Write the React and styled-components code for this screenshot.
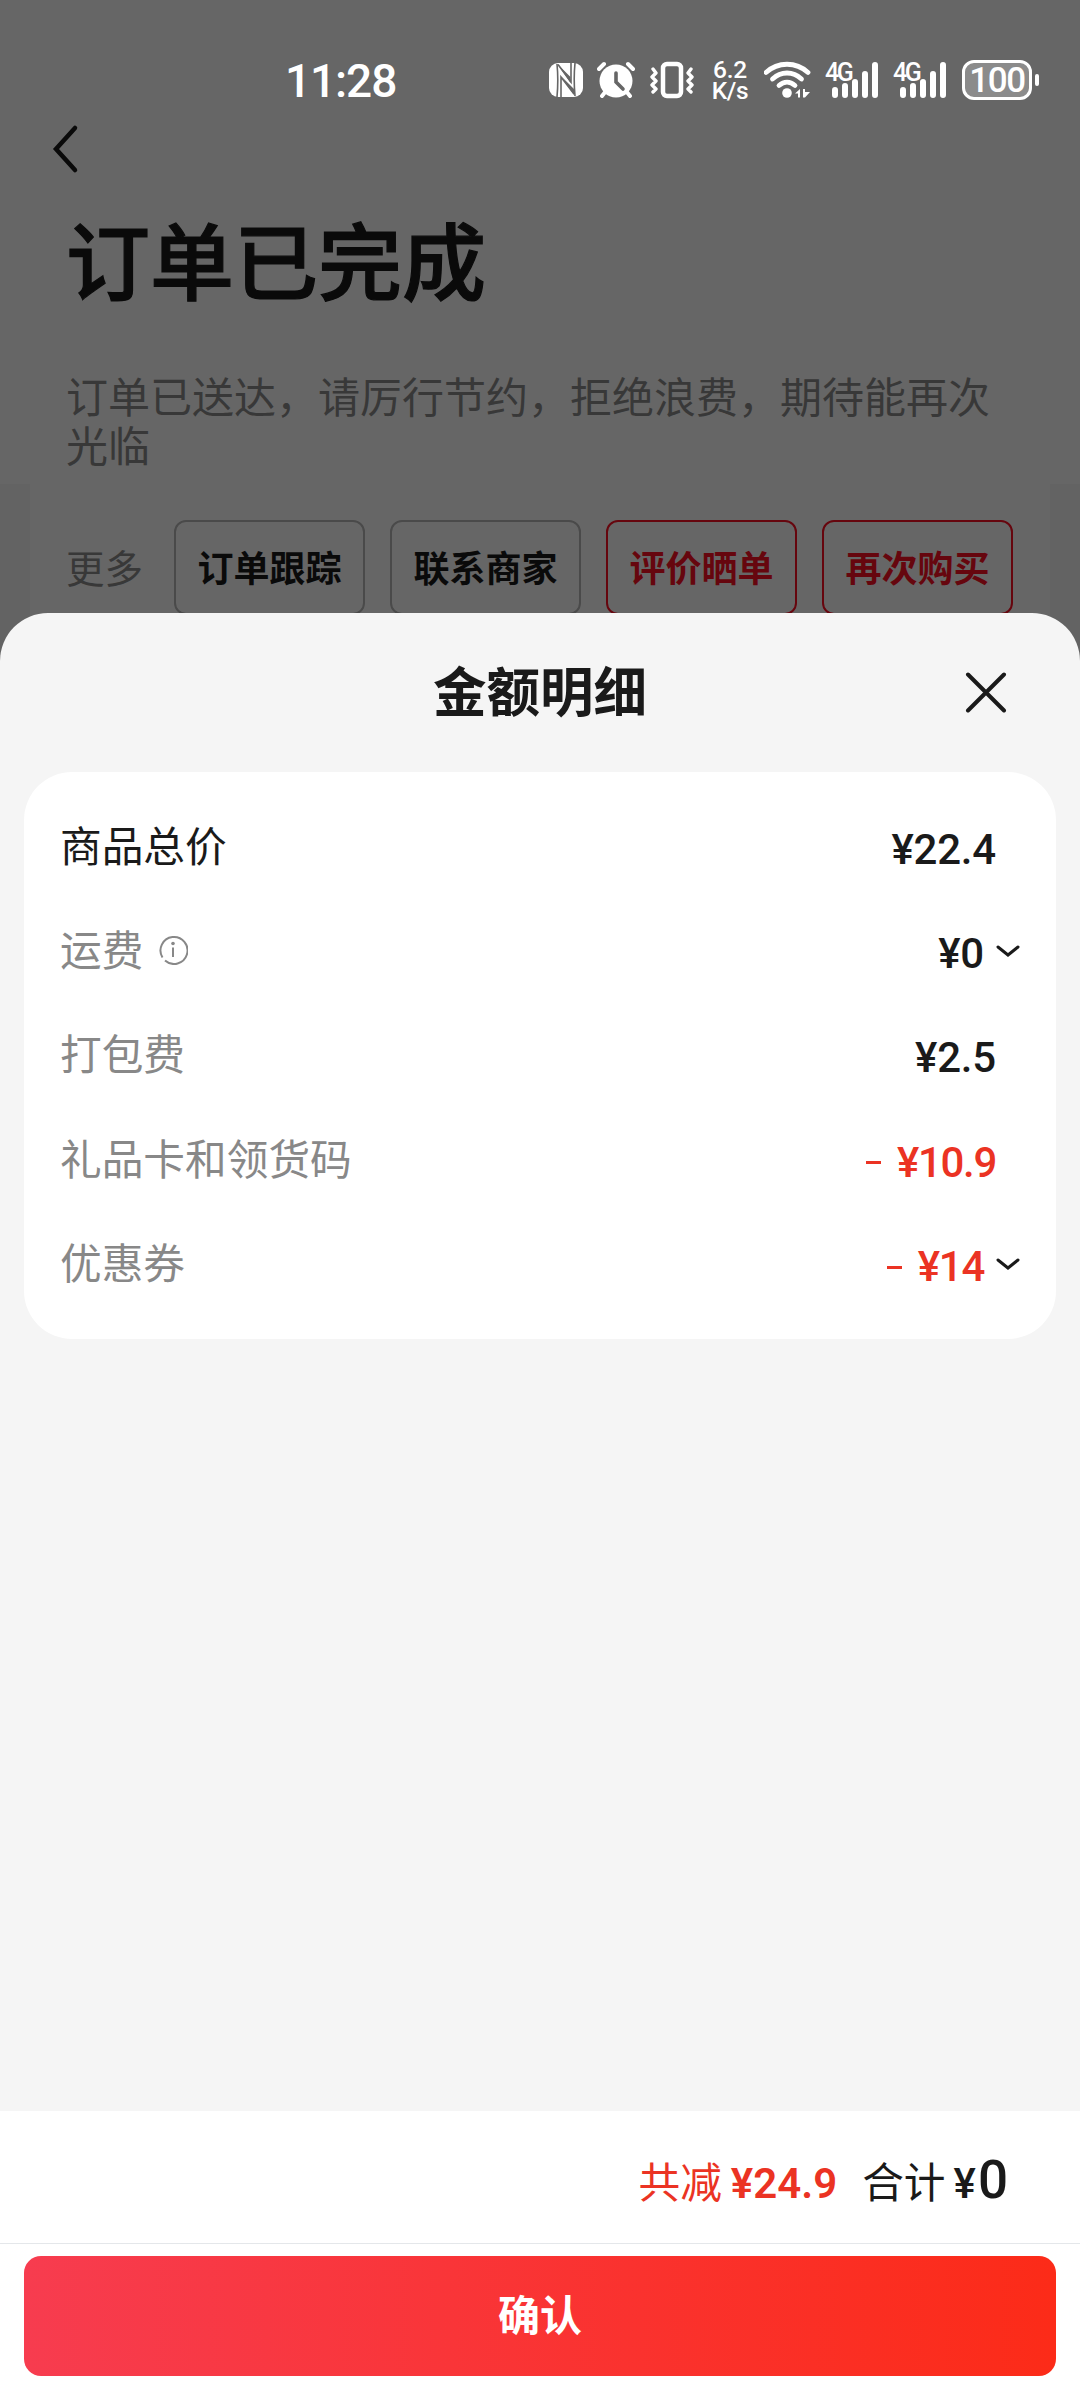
import React from "react";
import styled, { createGlobalStyle } from "styled-components";

const GlobalStyle = createGlobalStyle`
  * {
    box-sizing: border-box;
  }
  body {
    margin: 0;
    font-family: "Noto Sans CJK SC", sans-serif;
    color: #1a1a1a;
  }
`;

const Screen = styled.div`
  position: relative;
  width: 1080px;
  height: 2400px;
  overflow: hidden;
  background: #f7f7f7;
`;

// ---- status bar ----
const StatusBar = styled.div`
  position: absolute;
  top: 0;
  left: 0;
  right: 0;
  z-index: 2;
  height: 160px;
  padding: 0 41px 0 285px;
  display: flex;
  align-items: center;
  color: #fff;
  font-family: Roboto, sans-serif;
`;
const Time = styled.div`
  flex: 1;
  padding-top: 1px;
  font-size: 46px;
  font-weight: 500;
  line-height: 54px;
  letter-spacing: -1.1px;
`;
const StatusIcon = styled.svg`
  display: block;
  flex: none;
  width: ${(props) => props.$w}px;
  height: 40px;
  margin-left: ${(props) => props.$gap}px;
`;
const Speed = styled.div`
  width: 38px;
  margin-left: 17px;
  font-size: 24.5px;
  font-weight: 500;
  line-height: 21.5px;
  letter-spacing: -0.3px;
  text-align: center;
`;
const Signal = styled.div`
  display: flex;
  align-items: flex-start;
  height: 40px;
  margin-left: ${(props) => props.$gap}px;
`;
const Network = styled.span`
  width: 7px;
  margin-top: 1px;
  font-size: 25px;
  font-weight: 500;
  line-height: 24px;
  letter-spacing: -2.5px;
  white-space: nowrap;
`;
const Battery = styled.div`
  width: 70px;
  height: 40px;
  margin-left: 16px;
  border: 3px solid #fff;
  border-radius: 12px;
  background: #8b8b8b;
  font-size: 35px;
  font-weight: 500;
  line-height: 35px;
  letter-spacing: -1.4px;
  text-align: center;
`;
const BatteryTip = styled.div`
  width: 4px;
  height: 12px;
  margin-left: 3px;
  border-radius: 2px;
  background: #fff;
`;

// ---- order page under the mask ----
const Header = styled.div`
  height: 484px;
  padding: 122px 66px 0;
  background: #fff;
`;
const Back = styled.svg`
  display: block;
  width: 28px;
  height: 54px;
  margin-left: -14px;
`;
const Title = styled.h1`
  margin: 32px 0 0;
  font-size: 84px;
  font-weight: 500;
  line-height: 100px;
  -webkit-text-stroke: 1.2px #1a1a1a;
`;
const Desc = styled.p`
  margin: 62px 0 0;
  font-size: 42px;
  line-height: 49px;
  color: #8c8c8c;
`;
const Actions = styled.div`
  display: flex;
  align-items: center;
  gap: 25px;
  height: 200px;
  margin: 0 30px;
  padding: 36px 36px 70px;
  background: #fff;
`;
const More = styled.span`
  width: 83px;
  padding-bottom: 2px;
  font-size: 38.5px;
  color: #8c8c8c;
`;
const Action = styled.button`
  width: 191px;
  height: 95px;
  padding: 0 0 2px;
  border: 2px solid ${(props) => (props.$primary ? "#ff0f23" : "#b8b8b8")};
  border-radius: 12px;
  background: transparent;
  font-family: inherit;
  font-size: 36px;
  font-weight: 700;
  color: ${(props) => (props.$primary ? "#ff0f23" : "#1a1a1a")};
`;
const Mask = styled.div`
  position: absolute;
  inset: 0;
  background: rgba(0, 0, 0, 0.6);
`;

// ---- bottom sheet ----
const Sheet = styled.div`
  position: absolute;
  top: 613px;
  left: 0;
  right: 0;
  bottom: 0;
  display: flex;
  flex-direction: column;
  border-radius: 48px 48px 0 0;
  background: #f5f5f5;
  overflow: hidden;
`;
const SheetHeader = styled.div`
  display: grid;
  grid-template-columns: 1fr auto 1fr;
  align-items: center;
  height: 159px;
  padding: 0 73px;
`;
const SheetTitle = styled.h2`
  grid-column: 2;
  margin: 0 0 8px;
  font-size: 53.5px;
  font-weight: 700;
  line-height: 64px;
`;
const Close = styled.svg`
  justify-self: end;
  width: 42px;
  height: 42px;
`;
const Card = styled.div`
  height: 567px;
  margin: 0 24px;
  padding: 21px 36px 0 36px;
  border-radius: 48px;
  background: #fff;
`;
const Row = styled.div`
  display: flex;
  align-items: center;
  height: 104.4px;
`;
const Label = styled.div`
  flex: 1;
  display: flex;
  align-items: center;
  margin-bottom: 3px;
  font-size: 41.7px;
  line-height: 60px;
  color: ${(props) => (props.$strong ? "#1a1a1a" : "#888")};
`;
const Info = styled.svg`
  width: 30px;
  height: 30px;
  margin: 4px 0 0 15px;
`;
const Amount = styled.div`
  display: flex;
  align-items: center;
  margin: 9px ${(props) => (props.$arrow ? 0 : 24)}px 0 0;
  font-family: Roboto, sans-serif;
  font-size: 42px;
  font-weight: 500;
  line-height: 50px;
  letter-spacing: ${(props) => (props.$minus ? -1.3 : -0.2)}px;
  color: ${(props) => (props.$minus ? "#eb3323" : "#1a1a1a")};
`;
const Minus = styled.span`
  width: 15px;
  height: 3px;
  margin: 0 16px 0 0;
  background: currentColor;
`;
const Arrow = styled.svg`
  width: 24px;
  height: 16px;
  margin: -6px 0 0 12px;
`;
const Summary = styled.div`
  display: flex;
  align-items: baseline;
  height: 133px;
  margin-top: auto;
  padding: 39px 72px 0 0;
  justify-content: flex-end;
  border-bottom: 1px solid #e4e7ea;
  background: #fff;
  font-size: 41.7px;
  line-height: 60px;
`;
const Cut = styled.span`
  margin-right: 25px;
  color: #eb3323;
`;
const Price = styled.span`
  margin-left: ${(props) => props.$gap}px;
  font-family: Roboto, sans-serif;
  font-weight: ${(props) => props.$weight || 500};
  font-size: ${(props) => props.$size || 42}px;
`;
const Footer = styled.div`
  height: 156px;
  padding: 12px 24px 24px;
  background: #fff;
`;
const Confirm = styled.button`
  display: block;
  width: 100%;
  height: 120px;
  padding: 0 0 8px;
  border: none;
  border-radius: 17px;
  background: linear-gradient(90deg, #f73c4f, #fc2b18);
  font-family: inherit;
  font-size: 42px;
  font-weight: 700;
  color: #fff;
`;

const rows = [
  { label: "商品总价", value: "¥22.4", strong: true },
  { label: "运费", value: "¥0", info: true, arrow: true },
  { label: "打包费", value: "¥2.5" },
  { label: "礼品卡和领货码", value: "¥10.9", minus: true },
  { label: "优惠券", value: "¥14", minus: true, arrow: true },
];

const SignalBars = ({ gap }) => (
  <Signal $gap={gap}>
    <Network>4G</Network>
    <svg width="46" height="40" viewBox="0 0 46 40" stroke="#fff" strokeWidth="6" strokeLinecap="round">
      <path d="M3 30v5M13 26v9M23 22v13M33 14v21M43 5v30" />
    </svg>
  </Signal>
);

const Status = () => (
  <StatusBar>
    <Time>11:28</Time>
    <StatusIcon $w={34} $gap={0} viewBox="0 0 34 40">
      <rect x="0" y="3" width="34" height="34" rx="9" fill="#fff" />
      <g fill="none" stroke="#666" strokeWidth="1.6">
        <path d="M8 4c1 10 1 22 0 33M26 3c-1 10-1 22 0 33" />
        <path d="M22 3v19L9 4.500M12 37V17l13 17" />
      </g>
      <path d="M8.500 4l13 13v6zM12 16l13 13v6z" fill="#666" />
    </StatusIcon>
    <StatusIcon $w={38} $gap={14} viewBox="0 0 38 40" fill="none" stroke="#fff" strokeLinecap="round">
      <circle cx="19" cy="21" r="16.500" fill="#fff" stroke="none" />
      <path d="M2 9l5-5M36 9l-5-5M5 36l4-5M33 36l-4-5" strokeWidth="4" />
      <path d="M19 13v9l7 7" stroke="#666" strokeWidth="3.600" />
    </StatusIcon>
    <StatusIcon $w={44} $gap={15} viewBox="0 0 44 40" fill="none" stroke="#fff" strokeLinejoin="round" strokeLinecap="round">
      <rect x="13" y="4" width="18" height="32" rx="4" strokeWidth="4.500" />
      <path d="M3 9l3 4-4 4 4 4-4 4 4 4-3 3M41 9l-3 4 4 4-4 4 4 4-4 4 3 3" strokeWidth="3.400" />
    </StatusIcon>
    <Speed>6.2 K/s</Speed>
    <StatusIcon $w={48} $gap={15} viewBox="0 0 48 40" fill="none" stroke="#fff" strokeLinecap="round">
      <path d="M2 12.500C14 1.500 32 1.500 44 12.500" strokeWidth="4.800" />
      <path d="M8.500 19C17 11 29 11 37.500 19M15 25.500c5-4.500 11-4.500 16 0" strokeWidth="4.800" />
      <circle cx="23" cy="33" r="4.800" fill="#fff" stroke="none" />
      <path d="M31 33.500l5-4.500v8.500h-2v-4zM39 29h2v3h5l-5 5.500h-2z" fill="#fff" stroke="none" />
    </StatusIcon>
    <SignalBars gap={13} />
    <SignalBars gap={15} />
    <Battery>100</Battery>
    <BatteryTip />
  </StatusBar>
);

const OrderPage = () => (
  <>
    <Header>
      <Back viewBox="0 0 28 54" fill="none" stroke="#1a1a1a" strokeWidth="4.500" strokeLinecap="round">
        <path d="M23 6L4 27l19 21" />
      </Back>
      <Title>订单已完成</Title>
      <Desc>订单已送达，请厉行节约，拒绝浪费，期待能再次光临</Desc>
    </Header>
    <Actions>
      <More>更多</More>
      <Action>订单跟踪</Action>
      <Action>联系商家</Action>
      <Action $primary>评价晒单</Action>
      <Action $primary>再次购买</Action>
    </Actions>
  </>
);

const App = () => {
  return (
    <Screen>
      <GlobalStyle />
      <Status />
      <OrderPage />
      <Mask />
      <Sheet>
        <SheetHeader>
          <SheetTitle>金额明细</SheetTitle>
          <Close viewBox="0 0 42 42" stroke="#1a1a1a" strokeWidth="4" strokeLinecap="round">
            <path d="M3 2.500l36 36M39 2.500L3 38.500" />
          </Close>
        </SheetHeader>
        <Card>
          {rows.map((row) => (
            <Row key={row.label}>
              <Label $strong={row.strong}>
                {row.label}
                {row.info && (
                  <Info viewBox="0 0 30 30" fill="none" stroke="#888" strokeWidth="2">
                    <path d="M4.500 22.500A13.500 13.500 0 1 1 7 25.500M15 12.500V22" />
                    <circle cx="15" cy="8.500" r="1.800" fill="#888" stroke="none" />
                  </Info>
                )}
              </Label>
              <Amount $minus={row.minus} $arrow={row.arrow}>
                {row.minus && <Minus />}
                {row.value}
                {row.arrow && (
                  <Arrow viewBox="0 0 24 16" fill="none" stroke="#1a1a1a" strokeWidth="3" strokeLinecap="round">
                    <path d="M2 4l10 8 10-8" />
                  </Arrow>
                )}
              </Amount>
            </Row>
          ))}
        </Card>
        <Summary>
          <Cut>
            共减<Price $gap={9} $weight={600}>¥24.9</Price>
          </Cut>
          <span>
            合计<Price $gap={8}>¥</Price>
            <Price $size={53} $gap={2}>0</Price>
          </span>
        </Summary>
        <Footer>
          <Confirm>确认</Confirm>
        </Footer>
      </Sheet>
    </Screen>
  );
};

export default App;
